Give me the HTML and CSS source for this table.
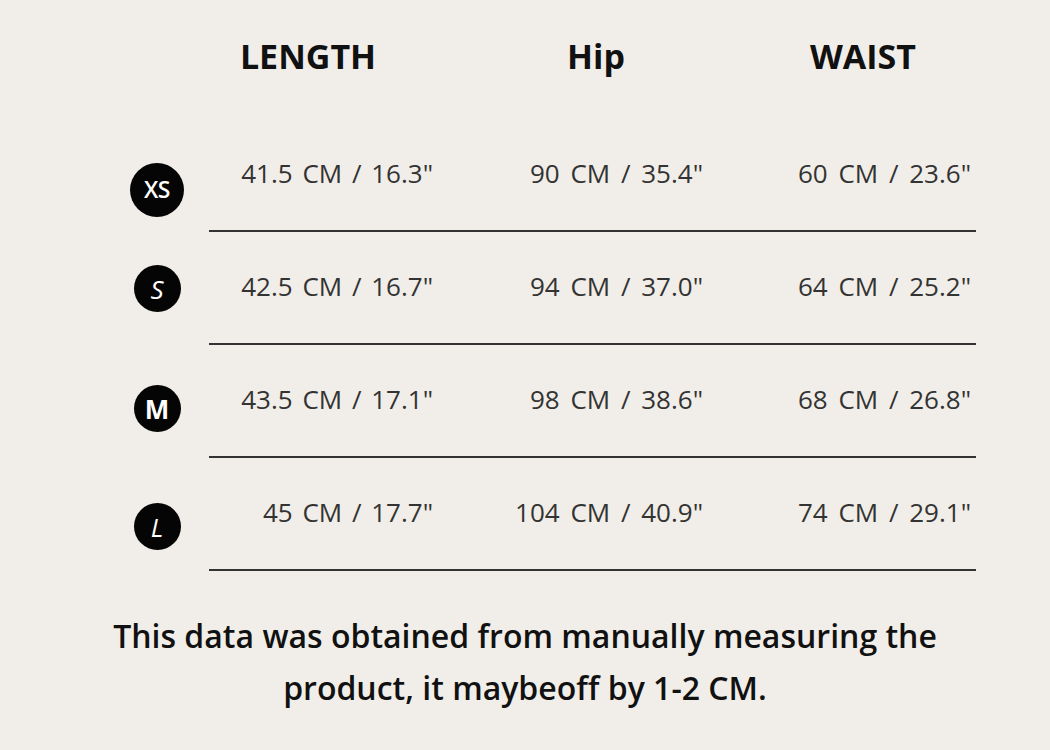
FILE: index.html
```html
<!DOCTYPE html>
<html lang="en">
<head>
<meta charset="utf-8">
<title>Size chart</title>
<link rel="stylesheet" href="styles.css">
</head>
<body>
<main class="chart">
  <div class="head">
    <div class="head__cell">LENGTH</div>
    <div class="head__cell">Hip</div>
    <div class="head__cell">WAIST</div>
  </div>

  <div class="row">
    <div class="size"><span class="badge badge--xs">XS</span></div>
    <div class="data">
      <span class="val val--first">41.5 CM / 16.3"</span>
      <span class="val">90 CM / 35.4"</span>
      <span class="val">60 CM / 23.6"</span>
    </div>
  </div>

  <div class="row">
    <div class="size"><span class="badge badge--s">S</span></div>
    <div class="data">
      <span class="val val--first">42.5 CM / 16.7"</span>
      <span class="val">94 CM / 37.0"</span>
      <span class="val">64 CM / 25.2"</span>
    </div>
  </div>

  <div class="row">
    <div class="size"><span class="badge badge--m">M</span></div>
    <div class="data">
      <span class="val val--first">43.5 CM / 17.1"</span>
      <span class="val">98 CM / 38.6"</span>
      <span class="val">68 CM / 26.8"</span>
    </div>
  </div>

  <div class="row">
    <div class="size"><span class="badge badge--l">L</span></div>
    <div class="data">
      <span class="val val--first">45 CM / 17.7"</span>
      <span class="val">104 CM / 40.9"</span>
      <span class="val">74 CM / 29.1"</span>
    </div>
  </div>

  <p class="note">This data was obtained from manually measuring the<br>product, it maybeoff by 1-2 CM.</p>
</main>
</body>
</html>
```

FILE: styles.css
```css
html, body {
  margin: 0;
  padding: 0;
}
body {
  background: #f1eee9;
  font-family: "Open Sans", "Noto Sans", "Liberation Sans", sans-serif;
  color: #333;
  width: 1050px;
  height: 750px;
  overflow: hidden;
}
.chart {
  padding: 20px 0 0 105px;
}
.head {
  display: grid;
  grid-template-columns: 216px 360px 174px;
  margin-left: 95px;
  height: 72px;
  align-items: center;
  margin-bottom: 27px;
}
.head__cell {
  text-align: center;
  font-weight: 700;
  font-size: 34px;
  color: #111;
  letter-spacing: 0;
}
.row {
  display: flex;
  height: 113px;
}
.size {
  width: 104px;
  display: flex;
  align-items: center;
  justify-content: center;
}
.badge {
  width: 47px;
  height: 47px;
  border-radius: 50%;
  background: #050505;
  color: #fff;
  display: flex;
  align-items: center;
  justify-content: center;
  font-size: 26px;
  font-weight: 700;
  line-height: 1;
}
.badge--xs {
  width: 54px;
  height: 54px;
  font-size: 23px;
  font-weight: 600;
  letter-spacing: -0.5px;
  margin-top: 28px;
}
.badge--s {
  font-style: italic;
  font-weight: 500;
  margin-top: 0;
}
.badge--m {
  margin-top: 14px;
}
.badge--l {
  font-style: italic;
  font-weight: 500;
  margin-top: 24px;
}
.data {
  width: 767px;
  display: grid;
  grid-template-columns: 224px 270px 268px;
  align-items: center;
  border-bottom: 2px solid #333;
  box-sizing: border-box;
  padding-bottom: 4px;
}
.val {
  text-align: right;
  white-space: pre;
  font-size: 26px;
  color: #333;
  word-spacing: 4px;
}
.val--first {
  word-spacing: 3px;
}
.note {
  margin: 39px 0 0 -105px;
  width: 1050px;
  text-align: center;
  font-size: 32px;
  font-weight: 600;
  line-height: 52px;
  color: #111;
}
```
